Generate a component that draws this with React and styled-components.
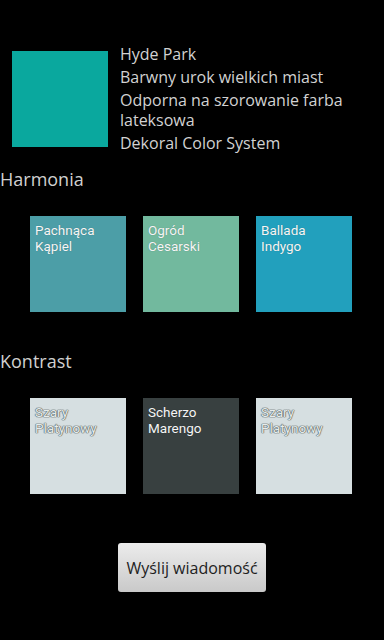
import React from 'react';
import styled, { createGlobalStyle } from 'styled-components';

const GlobalStyle = createGlobalStyle`
  html, body {
    margin: 0;
    padding: 0;
    background: #000;
  }
  body {
    font-family: "Open Sans", "DejaVu Sans", sans-serif;
  }
`;

const harmony = [
  { name: ['Pachnąca', 'Kąpiel'], color: '#4c9ea7' },
  { name: ['Ogród', 'Cesarski'], color: '#72b99e' },
  { name: ['Ballada', 'Indygo'], color: '#22a0bd' },
];

const contrast = [
  { name: ['Szary', 'Platynowy'], color: '#d6dfe1', light: true },
  { name: ['Scherzo', 'Marengo'], color: '#384040' },
  { name: ['Szary', 'Platynowy'], color: '#d6dfe1', light: true },
];

const App = () => {
  return (
    <Screen>
      <GlobalStyle />
      <Header>
        <MainSwatch />
        <Info>
          <InfoLine>Hyde Park</InfoLine>
          <InfoLine>Barwny urok wielkich miast</InfoLine>
          <InfoLine>Odporna na szorowanie farba lateksowa</InfoLine>
          <InfoLine>Dekoral Color System</InfoLine>
        </Info>
      </Header>

      <SectionTitle $top={12}>Harmonia</SectionTitle>
      <SwatchRow>
        {harmony.map((v, i) => (
          <Swatch key={i} $color={v.color}>
            <SwatchLine>{v.name[0]}</SwatchLine>
            <SwatchLine>{v.name[1]}</SwatchLine>
          </Swatch>
        ))}
      </SwatchRow>

      <SectionTitle $top={37}>Kontrast</SectionTitle>
      <SwatchRow>
        {contrast.map((v, i) => (
          <Swatch key={i} $color={v.color} $light={v.light}>
            <SwatchLine>{v.name[0]}</SwatchLine>
            <SwatchLine>{v.name[1]}</SwatchLine>
          </Swatch>
        ))}
      </SwatchRow>

      <ButtonWrap>
        <SendButton>Wyślij wiadomość</SendButton>
      </ButtonWrap>
    </Screen>
  );
};

const Screen = styled.div`
  width: 384px;
  height: 640px;
  background: #000;
  overflow: hidden;
  padding-top: 43px;
  box-sizing: border-box;
`;

const Header = styled.div`
  display: flex;
  align-items: center;
  gap: 12px;
  padding-left: 12px;
`;

const MainSwatch = styled.div`
  width: 96px;
  height: 96px;
  flex-shrink: 0;
  background: #0aa89e;
`;

const Info = styled.div`
  display: flex;
  flex-direction: column;
`;

const InfoLine = styled.div`
  font-size: 16px;
  line-height: 23px;
  color: #d2d2d2;
  &:nth-child(3) {
    line-height: 19.5px;
    padding: 2px 0;
  }
`;

const SectionTitle = styled.div`
  font-size: 18px;
  line-height: 24px;
  color: #d0d0d0;
  margin-top: ${(p) => p.$top}px;
`;

const SwatchRow = styled.div`
  display: flex;
  gap: 17px;
  padding-left: 30px;
  margin-top: 25px;
`;

const Swatch = styled.div`
  width: 96px;
  height: 96px;
  box-sizing: border-box;
  padding: 6px 5px;
  background: ${(p) => p.$color};
  font-family: Roboto, "DejaVu Sans", sans-serif;
  font-size: 13.5px;
  color: ${(p) => (p.$light ? '#e6ecec' : '#f6f6f6')};
  text-shadow: ${(p) =>
    p.$light
      ? '0 0 1px #5f6767, 0 0 1px #5f6767, 0 0 1px #5f6767, 0 0 1px #5f6767'
      : '0 0 1px rgba(0,0,0,0.3)'};
`;

const SwatchLine = styled.div`
  line-height: 16px;
  height: 16px;
`;

const ButtonWrap = styled.div`
  display: flex;
  justify-content: center;
  margin-top: 49px;
`;

const SendButton = styled.button`
  width: 148px;
  height: 49px;
  border: none;
  border-radius: 3px;
  background: linear-gradient(#ececec, #c9c9c9);
  color: #1e1e1e;
  font-family: "Open Sans", "DejaVu Sans", sans-serif;
  font-size: 16px;
  padding: 0;
`;

export default App;
